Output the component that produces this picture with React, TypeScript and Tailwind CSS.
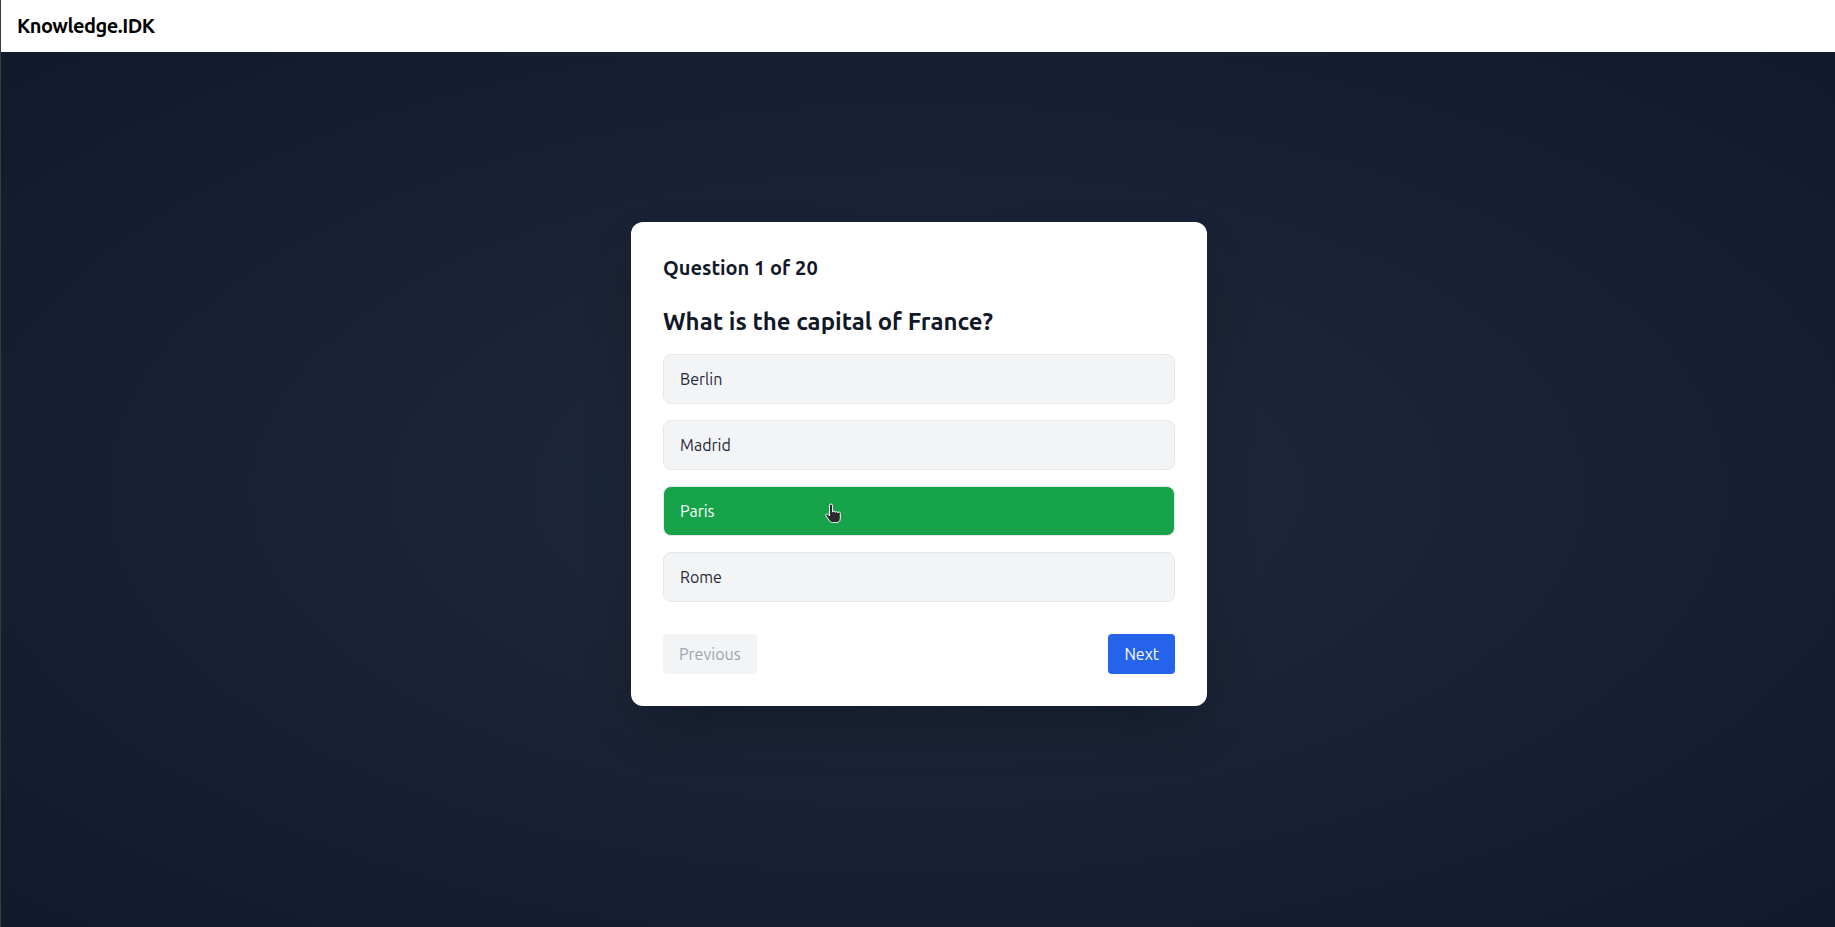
import React from "react";

const options = ["Berlin", "Madrid", "Paris", "Rome"];

function HandCursor() {
  return (
    <svg
      width="18"
      height="21"
      viewBox="0 0 18 21"
      className="absolute left-[160px] top-[16px] pointer-events-none"
    >
      <path
        d="M5.5 2.5a1.5 1.5 0 0 1 3 0V9h.3a1.3 1.3 0 0 1 2.5.4a1.3 1.3 0 0 1 2.5.5a1.3 1.3 0 0 1 2.5.8V15.5c0 2.5-1.6 4-3.6 4H8.4c-1.5 0-2.5-1-3.5-2.5L1.8 12.6a1.2 1.2 0 0 1 2-1.3L5.5 13Z"
        fill="#2a2a2a"
        stroke="#ffffff"
        strokeWidth="1"
        strokeLinejoin="round"
      />
    </svg>
  );
}

export default function App() {
  return (
    <div
      className="h-[927px] flex flex-col border-l border-[#3a3a3a] overflow-hidden"
      style={{ fontFamily: 'Ubuntu, Roboto, "Noto Sans", sans-serif' }}
    >
      <header className="bg-white px-4 py-3 shrink-0">
        <div className="text-xl leading-7 font-bold tracking-tight text-black">Knowledge.IDK</div>
      </header>
      <main className="flex-1 flex items-center justify-center pb-[52px] pl-[2px] bg-[radial-gradient(ellipse_at_center,#1f2a3c_0%,#182234_50%,#111a2d_100%)]">
        <div className="w-[576px] bg-white rounded-xl p-8 shadow-2xl">
          <h2 className="text-xl leading-7 font-semibold text-[#111827] mb-6">
            Question 1 of 20
          </h2>
          <h3 className="text-2xl leading-8 font-semibold text-[#111827] mb-4">
            What is the capital of France?
          </h3>
          <div className="flex flex-col gap-4">
            {options.map((o) =>
              o === "Paris" ? (
                <div
                  key={o}
                  className="relative px-4 py-3 rounded-lg border border-[#e5e7eb] bg-[#16a34a] text-white text-base leading-6"
                >
                  {o}
                  <HandCursor />
                </div>
              ) : (
                <div
                  key={o}
                  className="px-4 py-3 rounded-lg border border-[#e5e7eb] bg-[#f3f4f6] text-[#1f2937] text-base leading-6"
                >
                  {o}
                </div>
              )
            )}
          </div>
          <div className="flex justify-between mt-8">
            <button className="px-4 py-2 rounded bg-[#f3f4f6] text-[#9ca3af] text-base leading-6">
              Previous
            </button>
            <button className="px-4 py-2 rounded bg-[#2563eb] text-white text-base leading-6">
              Next
            </button>
          </div>
        </div>
      </main>
    </div>
  );
}
